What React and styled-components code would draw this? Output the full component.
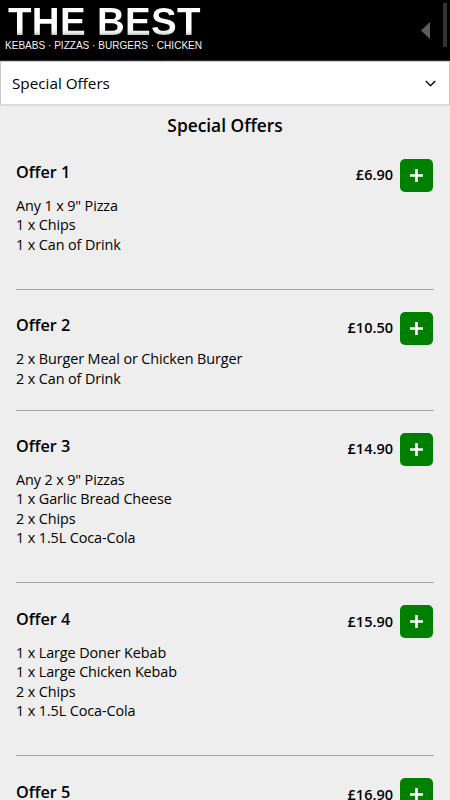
import React from "react";
import styled, { createGlobalStyle } from "styled-components";

const GlobalStyle = createGlobalStyle`
  * {
    box-sizing: border-box;
  }

  body {
    margin: 0;
    height: 800px;
    overflow: hidden;
    background: #eeeeee;
    color: #000;
    font-family: "Open Sans", sans-serif;
  }
`;

const Header = styled.header`
  display: flex;
  justify-content: space-between;
  height: 61px;
  background: #000;
  border-bottom: 1px solid #333;
`;

const Brand = styled.div`
  padding: 3px 0 0 5px;
  font-family: "Liberation Sans", Arial, sans-serif;
  white-space: nowrap;
`;

const BrandName = styled.div`
  padding-left: 3px;
  font-size: 38.5px;
  font-weight: 700;
  line-height: 37px;
  letter-spacing: 0.3px;
  color: transparent;
  background: linear-gradient(#fff 70%, #e8e8e8 80%, #aaa 90%);
  background-clip: text;
`;

const Tagline = styled.div`
  font-size: 10.05px;
  line-height: 11px;
  color: #f2f2f2;
`;

const HeaderTools = styled.div`
  display: flex;
  gap: 13px;
  padding: 3px 3px 0 0;
`;

const BackArrow = styled.svg`
  width: 9px;
  height: 17px;
  margin-top: 19px;
  fill: #5c5c5c;
`;

const ScrollThumb = styled.div`
  width: 4px;
  height: 44px;
  background: #333;
`;

const CategorySelect = styled.button`
  display: flex;
  align-items: center;
  justify-content: space-between;
  width: 100%;
  height: 45px;
  padding: 0 13px 0 11px;
  background: #fff;
  border: 1px solid #c8c8c8;
  border-bottom: 2px solid #dcdcdc;
  font-family: inherit;
  font-size: 15.25px;
  color: #000;
`;

const Chevron = styled.svg`
  width: 11px;
  height: 7px;
  fill: none;
  stroke: #111;
  stroke-width: 1.5;
`;

const Menu = styled.main`
  padding: 0 16px;
`;

const MenuTitle = styled.h2`
  height: 30.6px;
  margin: 0;
  padding-top: 7.4px;
  font-size: 17.35px;
  font-weight: 600;
  line-height: 24px;
  text-align: center;
`;

const OfferItem = styled.section`
  padding: 22px 0 ${({ $spaced }) => ($spaced ? "34.4px" : "21.2px")};
  border-bottom: 1px solid #a5a5a5;
`;

const OfferHead = styled.div`
  display: flex;
  align-items: center;
  height: 33px;
  padding-right: 1px;
`;

const OfferName = styled.h3`
  flex: 1;
  margin: 0;
  padding-bottom: 6.4px;
  font-size: 16.2px;
  font-weight: 600;
  line-height: 22px;
`;

const Price = styled.span`
  margin-right: 7px;
  padding-bottom: 1.6px;
  font-size: 14.5px;
  font-weight: 600;
`;

const AddButton = styled.button`
  display: flex;
  align-items: center;
  justify-content: center;
  width: 33px;
  height: 33px;
  padding: 0;
  border: 0;
  border-radius: 5px;
  background: #008000;
`;

const PlusIcon = styled.svg`
  width: 13px;
  height: 13px;
  stroke: #fff;
  stroke-width: 2.6;
`;

const OfferLines = styled.ul`
  margin: 0;
  padding: 4.2px 0 0;
  list-style: none;
  font-size: 14.4px;
  line-height: 19.6px;
  letter-spacing: -0.11px;
`;

const offers = [
  {
    name: "Offer 1",
    price: "£6.90",
    spaced: true,
    lines: ['Any 1 x 9" Pizza', "1 x Chips", "1 x Can of Drink"],
  },
  {
    name: "Offer 2",
    price: "£10.50",
    lines: ["2 x Burger Meal or Chicken Burger", "2 x Can of Drink"],
  },
  {
    name: "Offer 3",
    price: "£14.90",
    spaced: true,
    lines: [
      'Any 2 x 9" Pizzas',
      "1 x Garlic Bread Cheese",
      "2 x Chips",
      "1 x 1.5L Coca-Cola",
    ],
  },
  {
    name: "Offer 4",
    price: "£15.90",
    spaced: true,
    lines: [
      "1 x Large Doner Kebab",
      "1 x Large Chicken Kebab",
      "2 x Chips",
      "1 x 1.5L Coca-Cola",
    ],
  },
  { name: "Offer 5", price: "£16.90", lines: [] },
];

function Offer({ name, price, lines, spaced }) {
  return (
    <OfferItem $spaced={spaced}>
      <OfferHead>
        <OfferName>{name}</OfferName>
        <Price>{price}</Price>
        <AddButton aria-label={`Add ${name}`}>
          <PlusIcon viewBox="0 0 13 13">
            <path d="M6.5 0v13M0 6.5h13" />
          </PlusIcon>
        </AddButton>
      </OfferHead>
      <OfferLines>
        {lines.map((line) => (
          <li key={line}>{line}</li>
        ))}
      </OfferLines>
    </OfferItem>
  );
}

function App() {
  return (
    <>
      <GlobalStyle />
      <Header>
        <Brand>
          <BrandName>THE BEST</BrandName>
          <Tagline>KEBABS · PIZZAS · BURGERS · CHICKEN</Tagline>
        </Brand>
        <HeaderTools>
          <BackArrow viewBox="0 0 9 17">
            <path d="M9 0v17L0 8.5z" />
          </BackArrow>
          <ScrollThumb />
        </HeaderTools>
      </Header>
      <CategorySelect>
        Special Offers
        <Chevron viewBox="0 0 11 7">
          <path d="M0.8 1L5.5 5.7L10.2 1" />
        </Chevron>
      </CategorySelect>
      <Menu>
        <MenuTitle>Special Offers</MenuTitle>
        {offers.map((offer) => (
          <Offer key={offer.name} {...offer} />
        ))}
      </Menu>
    </>
  );
}

export default App;
